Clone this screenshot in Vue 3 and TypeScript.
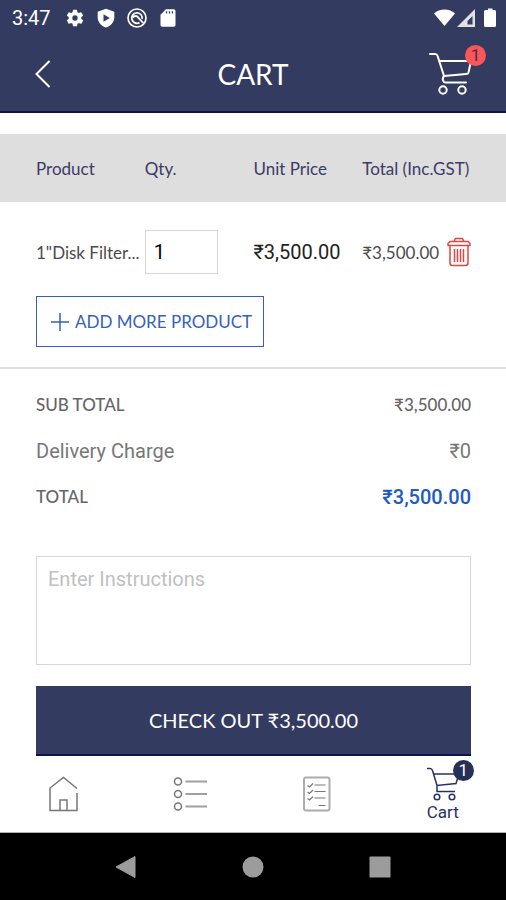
<script setup lang="ts">
import { computed, ref } from 'vue'

interface CartItem {
  id: number
  name: string
  qty: number
  price: number
}

const items = ref<CartItem[]>([{ id: 1, name: '1"Disk Filter...', qty: 1, price: 3500 }])
const delivery = 0
const instructions = ref('')

const money = (n: number): string =>
  '₹' + n.toLocaleString('en-US', { minimumFractionDigits: 2, maximumFractionDigits: 2 })

const subTotal = computed(() => items.value.reduce((sum, i) => sum + i.qty * i.price, 0))
const total = computed(() => subTotal.value + delivery)
const count = computed(() => items.value.length)

function removeItem(id: number): void {
  items.value = items.value.filter((i) => i.id !== id)
}
</script>

<template>
  <div class="screen">
    <div class="status">
      <span class="time">3:47</span>
      <svg class="s-icon" viewBox="0 0 24 24" aria-hidden="true">
        <path fill="currentColor" fill-rule="evenodd" d="M19.4 13a7.5 7.5 0 0 0 0-2l2.100-1.650a.5.5 0 0 0 .12-.64l-2-3.460a.5.5 0 0 0-.61-.22l-2.490 1a7.300 7.300 0 0 0-1.690-.98l-.38-2.650A.5.5 0 0 0 14 2h-4a.5.5 0 0 0-.49.42l-.38 2.650c-.61.25-1.170.59-1.690.98l-2.490-1a.5.5 0 0 0-.61.22l-2 3.460a.5.5 0 0 0 .12.64L4.570 11a7.900 7.900 0 0 0 0 2l-2.110 1.650a.5.5 0 0 0-.12.64l2 3.460c.12.22.39.3.61.22l2.490-1c.52.4 1.080.73 1.690.98l.38 2.650c.03.24.24.4.49.4h4c.25 0 .46-.16.49-.4l.38-2.650c.61-.25 1.170-.59 1.690-.98l2.490 1c.23.09.49 0 .61-.22l2-3.460a.5.5 0 0 0-.12-.64zM12 15.200a3.200 3.200 0 1 1 0-6.400 3.200 3.200 0 0 1 0 6.400z" />
      </svg>
      <svg class="s-icon" viewBox="0 0 24 24" aria-hidden="true">
        <path fill="currentColor" fill-rule="evenodd" d="M12 1 2 4.500V11c0 6 4.500 10.500 10 12.500 5.500-2 10-6.500 10-12.500V4.500zM9 7.500l7.500 4.500L9 16.500z" />
      </svg>
      <svg class="s-icon" viewBox="0 0 24 24" aria-hidden="true" fill="none" stroke="currentColor">
        <circle cx="12" cy="12" r="10.800" stroke-width="2" />
        <path stroke-width="2.200" d="M15 17.600A6.300 6.300 0 1 1 18.200 13M7 11.500C9 9 12 9 13.500 11.500L19.500 18" />
      </svg>
      <svg class="s-icon" viewBox="0 0 24 24" aria-hidden="true">
        <path fill="currentColor" fill-rule="evenodd" d="M9.500 1.500H19a2 2 0 0 1 2 2v17a2 2 0 0 1-2 2H5a2 2 0 0 1-2-2V8zM9.500 4v2.500H11V4zm3.500 0v2.500h1.500V4zm3.500 0v2.500H18V4z" />
      </svg>
      <svg class="signals" viewBox="0 0 64 20" aria-hidden="true" fill="currentColor">
        <path d="M0 5.500C5.500 0 15.500 0 21 5.500L10.500 18z" />
        <path fill-rule="evenodd" fill-opacity="0.850" d="M41 1v18H23zM38.500 8v8.500H33.500V13z" />
        <path d="M51.500 2H54V.500h4.500V2h2A1.500 1.500 0 0 1 62 3.500v14a1.500 1.500 0 0 1-1.500 1.500h-9a1.500 1.500 0 0 1-1.500-1.500v-14A1.500 1.500 0 0 1 51.500 2z" />
      </svg>
    </div>

    <header class="bar">
      <button class="back" type="button" aria-label="Back">
        <svg viewBox="0 0 18 30" fill="none" stroke="currentColor" stroke-width="2">
          <path d="M14.500 2 1.500 15l13 13" />
        </svg>
      </button>
      <h1>CART</h1>
      <a class="top-cart" href="#cart" aria-label="Cart">
        <svg viewBox="0 0 42 44" fill="none" stroke="currentColor" stroke-width="2" stroke-linejoin="round" stroke-linecap="round">
          <path d="M1 2h5q2 0 2.600 2l6.400 20 22-2q2 0 2.500-1.500L42 9H10M15 24q-2.500 3 0 6 .5.500 2 .5h20" />
          <circle cx="14" cy="38" r="3.700" />
          <circle cx="33" cy="38" r="3.700" />
        </svg>
        <span class="badge red">{{ count }}</span>
      </a>
    </header>

    <main>
      <table class="cart">
        <thead>
          <tr>
            <th scope="col">Product</th>
            <th scope="col">Qty.</th>
            <th scope="col">Unit Price</th>
            <th scope="col">Total (Inc.GST)</th>
          </tr>
        </thead>
        <tbody>
          <tr v-for="item in items" :key="item.id">
            <td class="name">{{ item.name }}</td>
            <td><input v-model.number="item.qty" class="qty" type="text" inputmode="numeric" aria-label="Quantity" /></td>
            <td class="unit">{{ money(item.price) }}</td>
            <td class="line-total">
              <span>{{ money(item.price * item.qty) }}</span>
              <button class="trash" type="button" aria-label="Remove" @click="removeItem(item.id)">
                <svg viewBox="0 0 24 30" fill="none" stroke="currentColor" stroke-width="1.500" stroke-linejoin="round">
                  <path d="M7 4.500 8.500 1.500h7L17 4.500M3 4.500h18l2 2v2H1v-2zM3 8.500V26q0 2.500 2.500 2.500h13q2.500 0 2.500-2.500V8.500M7.500 12v13M10.500 12v13M13.500 12v13M16.500 12v13" />
                </svg>
              </button>
            </td>
          </tr>
        </tbody>
      </table>

      <div class="more">
        <button class="add" type="button">
          <svg viewBox="0 0 18 18" fill="none" stroke="currentColor" stroke-width="1.500" aria-hidden="true">
            <path d="M9 0v18M0 9h18" />
          </svg>
          ADD MORE PRODUCT
        </button>
      </div>

      <dl class="summary">
        <div class="strong">
          <dt>SUB TOTAL</dt>
          <dd>{{ money(subTotal) }}</dd>
        </div>
        <div class="delivery">
          <dt>Delivery Charge</dt>
          <dd>₹{{ delivery }}</dd>
        </div>
        <div class="strong">
          <dt>TOTAL</dt>
          <dd class="grand">{{ money(total) }}</dd>
        </div>
      </dl>

      <div class="form">
        <textarea v-model="instructions" placeholder="Enter Instructions" aria-label="Enter Instructions"></textarea>
        <button class="checkout" type="button">CHECK OUT {{ money(total) }}</button>
      </div>
    </main>

    <nav class="tabs">
      <a href="#home" aria-label="Home">
        <svg class="tab-icon" viewBox="0 0 34 36" fill="none" stroke="currentColor" stroke-width="1.500">
          <path d="M31 12.500 17.500 1.500 4 12v22.500h27V17M14 34V24h7v10" />
        </svg>
      </a>
      <a href="#list" aria-label="Categories">
        <svg class="tab-icon" viewBox="0 0 34 36" fill="none" stroke="currentColor">
          <g stroke-width="1.500">
            <circle cx="5" cy="5.500" r="3.500" />
            <circle cx="5" cy="18" r="3.500" />
            <circle cx="5" cy="30.500" r="3.500" />
          </g>
          <path stroke-width="2" stroke-opacity="0.700" d="M12.500 5.500H34M12.500 18H34M12.500 30.500H34" />
        </svg>
      </a>
      <a href="#orders" aria-label="Orders">
        <svg class="tab-icon" viewBox="0 0 34 36" fill="none" stroke="currentColor">
          <rect x="5" y="1.500" width="25.500" height="33" rx="2" stroke-width="2" stroke-opacity="0.600" />
          <path stroke-width="1.200" d="M8.500 9.500l2 1.500 3.500-3.500M8.500 16l2 1.500 3.500-3.500M8.500 22.500l2 1.500 3.500-3.500M15.500 9H26.500M15.500 15.500H26.500M15.500 22H26.500M19.500 29.500H26.500" />
        </svg>
      </a>
      <a class="active" href="#cart">
        <span class="cart-wrap">
          <svg viewBox="0 0 36 36" fill="none" stroke="currentColor" stroke-width="1.500">
            <path d="M2 2.500h3q2 0 2.500 2L12 19.500l19-2 3-9.500H9M12 19.500v6h18" />
            <circle cx="12" cy="31" r="2.800" />
            <circle cx="27" cy="31" r="2.800" />
          </svg>
          <span class="badge navy">{{ count }}</span>
        </span>
        <span>Cart</span>
      </a>
    </nav>

    <div class="system">
      <button type="button" aria-label="System back">
        <svg viewBox="0 0 24 24"><path fill="currentColor" stroke="currentColor" stroke-linejoin="round" d="M21 1.500v21L2 12z" /></svg>
      </button>
      <button type="button" aria-label="System home">
        <svg viewBox="0 0 24 24"><circle fill="currentColor" cx="12" cy="12" r="10.500" /></svg>
      </button>
      <button type="button" aria-label="Recent apps">
        <svg viewBox="0 0 24 24"><rect fill="currentColor" x="1.500" y="1.500" width="21" height="21" rx="1" /></svg>
      </button>
    </div>
  </div>
</template>

<style>
body {
  margin: 0;
  background: #fff;
}
</style>

<style scoped>
.screen {
  min-height: 100vh;
  display: flex;
  flex-direction: column;
  background: #fff;
  color: #666;
  font-family: Lato, "Liberation Sans", sans-serif;
  font-size: 17px;
}
.screen * {
  box-sizing: border-box;
}
button {
  font: inherit;
  color: inherit;
  background: none;
  border: 0;
  padding: 0;
  cursor: pointer;
}
a {
  color: inherit;
  text-decoration: none;
}
svg {
  display: block;
}
.status {
  height: 36px;
  display: flex;
  align-items: center;
  gap: 11px;
  padding: 0 8px 0 12px;
  background: #333b60;
  color: #fff;
}
.time {
  font-family: Roboto, sans-serif;
  font-size: 20px;
  margin-right: 3px;
}
.s-icon {
  width: 20px;
  height: 20px;
}
.signals {
  width: 64px;
  height: 20px;
  margin-left: auto;
}
.bar {
  height: 77px;
  display: grid;
  grid-template-columns: 1fr auto 1fr;
  align-items: center;
  padding: 0 35px;
  background: #333b60;
  border-bottom: 2px solid #111350;
  color: #fff;
}
.back {
  width: 20px;
}
.back svg {
  width: 18px;
  height: 30px;
}
h1 {
  margin: 0;
  font-size: 28px;
  font-weight: 400;
  line-height: 32px;
}
.top-cart {
  position: relative;
  justify-self: end;
}
.top-cart svg {
  width: 42px;
  height: 44px;
}
.badge {
  position: absolute;
  display: grid;
  place-items: center;
  width: 21px;
  height: 21px;
  border-radius: 50%;
  font-family: Roboto, sans-serif;
  font-size: 17px;
  line-height: 21px;
}
.red {
  top: -7px;
  right: -15px;
  background: #fb5557;
  color: #45304f;
}
.navy {
  top: -6px;
  right: -13px;
  background: #273058;
  color: #fff;
}
main {
  flex: 1;
  padding-top: 21px;
}
.cart,
.cart thead,
.cart tbody {
  display: block;
}
.cart tr {
  display: grid;
  grid-template-columns: repeat(4, minmax(0, 1fr));
  align-items: center;
  padding: 0 35px 0 36px;
}
.cart thead tr {
  height: 68px;
  background: #dedede;
  color: #3c3b66;
}
th,
td {
  padding: 0;
  text-align: left;
  font-weight: 400;
  white-space: nowrap;
}
.cart tbody tr {
  padding-top: 28px;
}
.name {
  color: #4b4b4b;
}
.qty {
  display: block;
  width: 73px;
  height: 44px;
  padding: 0 8px;
  border: 1px solid #d6d6d6;
  border-radius: 0;
  background: #fff;
  color: #000;
  font: 20px Roboto, sans-serif;
}
.unit {
  color: #222;
  font-family: Roboto, sans-serif;
  font-size: 20px;
}
.line-total {
  display: flex;
  align-items: center;
  justify-content: space-between;
  color: #4b4b4b;
}
.trash {
  color: #e04444;
}
.trash svg {
  width: 24px;
  height: 30px;
}
.more {
  padding: 22px 36px 20px;
  border-bottom: 2px solid #dedede;
}
.add {
  display: flex;
  align-items: center;
  gap: 6px;
  height: 51px;
  padding: 0 11px 0 14px;
  border: 1px solid #355fbe;
  color: #355fbe;
  font-size: 17px;
}
.add svg {
  width: 18px;
  height: 18px;
}
.summary {
  margin: 0;
  padding: 24px 35px 0 36px;
  display: grid;
  gap: 22px;
}
.summary div {
  display: flex;
  justify-content: space-between;
  align-items: center;
  line-height: 24px;
}
dd {
  margin: 0;
}
.strong {
  font-weight: 500;
}
.delivery {
  font-family: Roboto, sans-serif;
  font-size: 20px;
  color: #777;
}
.grand {
  font-family: Roboto, sans-serif;
  font-size: 20px;
  font-weight: 500;
  color: #2059c4;
}
.form {
  display: grid;
  gap: 21px;
  padding: 47px 35px 0 36px;
}
textarea {
  display: block;
  width: 100%;
  height: 109px;
  padding: 10px 11px;
  border: 1px solid #d6d6d6;
  border-radius: 0;
  resize: none;
  background: #fff;
  color: #222;
  font: 20px/24px Roboto, sans-serif;
}
textarea::placeholder {
  color: #c0c0c0;
  opacity: 1;
}
.checkout {
  height: 70px;
  background: #333b60;
  border-bottom: 2px solid #111350;
  color: #fff;
  font-size: 20px;
}
.tabs {
  height: 77px;
  display: grid;
  grid-template-columns: repeat(4, 1fr);
  border-bottom: 1px solid #b0b0b0;
  color: #777;
}
.tabs a {
  display: flex;
  flex-direction: column;
  align-items: center;
  justify-content: center;
}
.tab-icon {
  width: 34px;
  height: 36px;
}
.tabs .active {
  color: #273068;
  font-family: Roboto, sans-serif;
  font-size: 17px;
  line-height: 20px;
}
.cart-wrap {
  position: relative;
}
.cart-wrap svg {
  width: 36px;
  height: 36px;
}
.system {
  height: 67px;
  display: grid;
  grid-template-columns: repeat(3, 1fr);
  align-items: center;
  padding: 0 63px;
  background: #000;
  color: #9c9c9c;
}
.system button {
  justify-self: center;
}
.system svg {
  width: 24px;
  height: 24px;
}
</style>
